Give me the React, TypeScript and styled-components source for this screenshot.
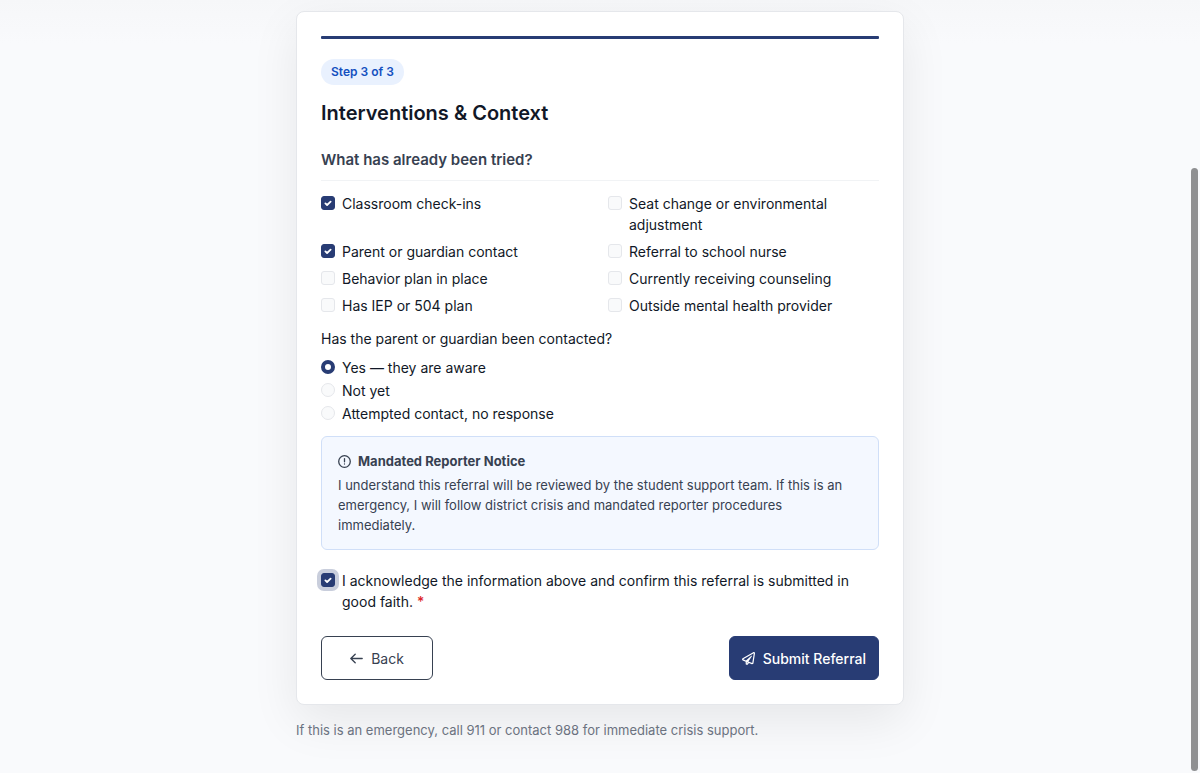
import React, { useState } from 'react';
import styled, { createGlobalStyle, css } from 'styled-components';
import { FaRegPaperPlane } from 'react-icons/fa';

const GlobalStyle = createGlobalStyle`
  *, *::before, *::after { box-sizing: border-box; }
  html { scrollbar-width: none; }
  body {
    margin: 0;
    background: #f9fafb;
    color: #111827;
    font-family: Inter, "Liberation Sans", sans-serif;
    font-size: 14px;
    line-height: 21px;
  }
`;

const Page = styled.div`
  min-height: 100vh;
  padding: 11px 16px 32px;
  background: linear-gradient(#f6f7f9, #f9fafc 44px);
`;

const Column = styled.main`
  max-width: 608px;
  margin: 0 auto;
`;

const Card = styled.form`
  padding: 24px;
  background: #fff;
  border: 1px solid #e5e7eb;
  border-radius: 8px;
  box-shadow: 0 16px 48px rgba(0, 0, 0, 0.08);
`;

const Progress = styled.div`
  height: 3px;
  margin-bottom: 20px;
  border-radius: 1px;
  background: #283c74;
`;

const StepBadge = styled.span`
  display: inline-block;
  padding: 3px 10px;
  border-radius: 13px;
  background: #e9f1fe;
  color: #1450c0;
  font-size: 12px;
  font-weight: 600;
  line-height: 20px;
`;

const Title = styled.h1`
  margin: 14px 0 0;
  font-size: 20px;
  font-weight: 600;
  line-height: 28px;
`;

const SectionTitle = styled.h2`
  margin: 22px 0 12px;
  padding-bottom: 9px;
  border-bottom: 1px solid #f1f3f5;
  color: #374151;
  font-size: 15px;
  font-weight: 600;
  line-height: 22px;
`;

const CheckGrid = styled.div`
  display: grid;
  grid-template-columns: 1fr 1fr;
  gap: 6px 16px;
`;

const Choice = styled.label`
  display: flex;
  align-items: flex-start;
  gap: 7px;
`;

const controlBase = css`
  appearance: none;
  flex: none;
  width: 14px;
  height: 14px;
  margin: 3px 0 0;
  border: 1px solid #e5e7eb;
  background: #f9fafb center / 100% no-repeat;
`;

const Checkbox = styled.input.attrs({ type: 'checkbox' })`
  ${controlBase}
  border-radius: 3px;
  &:checked {
    border-color: #283c74;
    background-color: #283c74;
    background-image: url("data:image/svg+xml,%3Csvg xmlns='http://www.w3.org/2000/svg' viewBox='0 0 16 16'%3E%3Cpath fill='none' stroke='%23fff' stroke-width='2.4' stroke-linecap='round' stroke-linejoin='round' d='M4.5 8.5l2.3 2.2 4.7-4.5'/%3E%3C/svg%3E");
  }
  &:focus {
    outline: none;
    box-shadow: 0 0 0 4px #c9cedc;
  }
`;

const Radio = styled.input.attrs({ type: 'radio' })`
  ${controlBase}
  border-radius: 50%;
  &:checked {
    border: 4px solid #283c74;
    background: #fff;
  }
`;

const RadioGroup = styled.fieldset`
  display: flex;
  flex-direction: column;
  gap: 2px;
  margin: 12px 0;
  padding: 0;
  border: 0;
`;

const Question = styled.legend`
  margin-bottom: 8px;
  padding: 0;
`;

const Notice = styled.section`
  padding: 14px 16px;
  border: 1px solid #d0dff8;
  border-radius: 6px;
  background: #f4f8ff;
  color: #374151;
  font-size: 13px;
  line-height: 20px;
`;

const NoticeTitle = styled.h3`
  display: flex;
  align-items: center;
  gap: 7px;
  margin: 0 0 4px;
  font-size: 13px;
  font-weight: 700;
`;

const NoticeText = styled.p`
  margin: 0;
`;

const Acknowledge = styled.div`
  margin: 20px 0 24px;
`;

const Required = styled.span`
  color: #dc2626;
  font-weight: 500;
`;

const Actions = styled.div`
  display: flex;
  justify-content: space-between;
`;

const Button = styled.button<{ $primary?: boolean }>`
  display: inline-flex;
  align-items: center;
  justify-content: center;
  gap: 8px;
  min-width: 112px;
  height: 44px;
  padding: 0 12px;
  border: 1px solid ${(p) => (p.$primary ? '#283c74' : '#374151')};
  border-radius: 6px;
  background: ${(p) => (p.$primary ? '#283c74' : '#fff')};
  color: ${(p) => (p.$primary ? '#fff' : '#374151')};
  font: inherit;
  font-weight: ${(p) => (p.$primary ? 500 : 400)};
`;

const LineIcon = styled.svg.attrs({ width: 13, height: 13, viewBox: '0 0 13 13', 'aria-hidden': true })`
  flex: none;
  fill: none;
  stroke: currentColor;
  stroke-width: 1.3;
  stroke-linecap: round;
  stroke-linejoin: round;
`;

const Footnote = styled.p`
  margin: 15px 0 0;
  color: #6b7280;
  font-size: 13px;
  line-height: 20px;
`;

const ScrollThumb = styled.div`
  position: fixed;
  top: 168px;
  right: 2px;
  bottom: 2px;
  width: 7px;
  border-radius: 4px;
  background: #8f9092;
`;

const interventions = [
  'Classroom check-ins',
  'Seat change or environmental adjustment',
  'Parent or guardian contact',
  'Referral to school nurse',
  'Behavior plan in place',
  'Currently receiving counseling',
  'Has IEP or 504 plan',
  'Outside mental health provider',
];

const contactOptions = ['Yes — they are aware', 'Not yet', 'Attempted contact, no response'];

export default function App() {
  const [tried, setTried] = useState<string[]>(['Classroom check-ins', 'Parent or guardian contact']);
  const [contact, setContact] = useState(contactOptions[0]);

  const toggle = (item: string) =>
    setTried((now) => (now.includes(item) ? now.filter((i) => i !== item) : [...now, item]));

  return (
    <Page>
      <GlobalStyle />
      <Column>
        <Card onSubmit={(e) => e.preventDefault()}>
          <Progress />
          <StepBadge>Step 3 of 3</StepBadge>
          <Title>Interventions &amp; Context</Title>
          <SectionTitle>What has already been tried?</SectionTitle>
          <CheckGrid>
            {interventions.map((item) => (
              <Choice key={item}>
                <Checkbox checked={tried.includes(item)} onChange={() => toggle(item)} />
                <span>{item}</span>
              </Choice>
            ))}
          </CheckGrid>
          <RadioGroup>
            <Question>Has the parent or guardian been contacted?</Question>
            {contactOptions.map((option) => (
              <Choice key={option}>
                <Radio name="contact" checked={contact === option} onChange={() => setContact(option)} />
                <span>{option}</span>
              </Choice>
            ))}
          </RadioGroup>
          <Notice>
            <NoticeTitle>
              <LineIcon>
                <circle cx="6.5" cy="6.5" r="5.8" />
                <path d="M6.5 3.6v3.2M6.5 9v.1" />
              </LineIcon>
              Mandated Reporter Notice
            </NoticeTitle>
            <NoticeText>
              I understand this referral will be reviewed by the student support team. If this is an emergency, I
              will follow district crisis and mandated reporter procedures immediately.
            </NoticeText>
          </Notice>
          <Acknowledge>
            <Choice>
              <Checkbox defaultChecked autoFocus />
              <span>
                I acknowledge the information above and confirm this referral is submitted in good faith.{' '}
                <Required>*</Required>
              </span>
            </Choice>
          </Acknowledge>
          <Actions>
            <Button type="button">
              <LineIcon>
                <path d="M12.2 6.5H.8M5.2 2.2L.8 6.5l4.4 4.3" />
              </LineIcon>
              Back
            </Button>
            <Button type="submit" $primary>
              <FaRegPaperPlane size={13} aria-hidden />
              Submit Referral
            </Button>
          </Actions>
        </Card>
        <Footnote>If this is an emergency, call 911 or contact 988 for immediate crisis support.</Footnote>
      </Column>
      <ScrollThumb />
    </Page>
  );
}
